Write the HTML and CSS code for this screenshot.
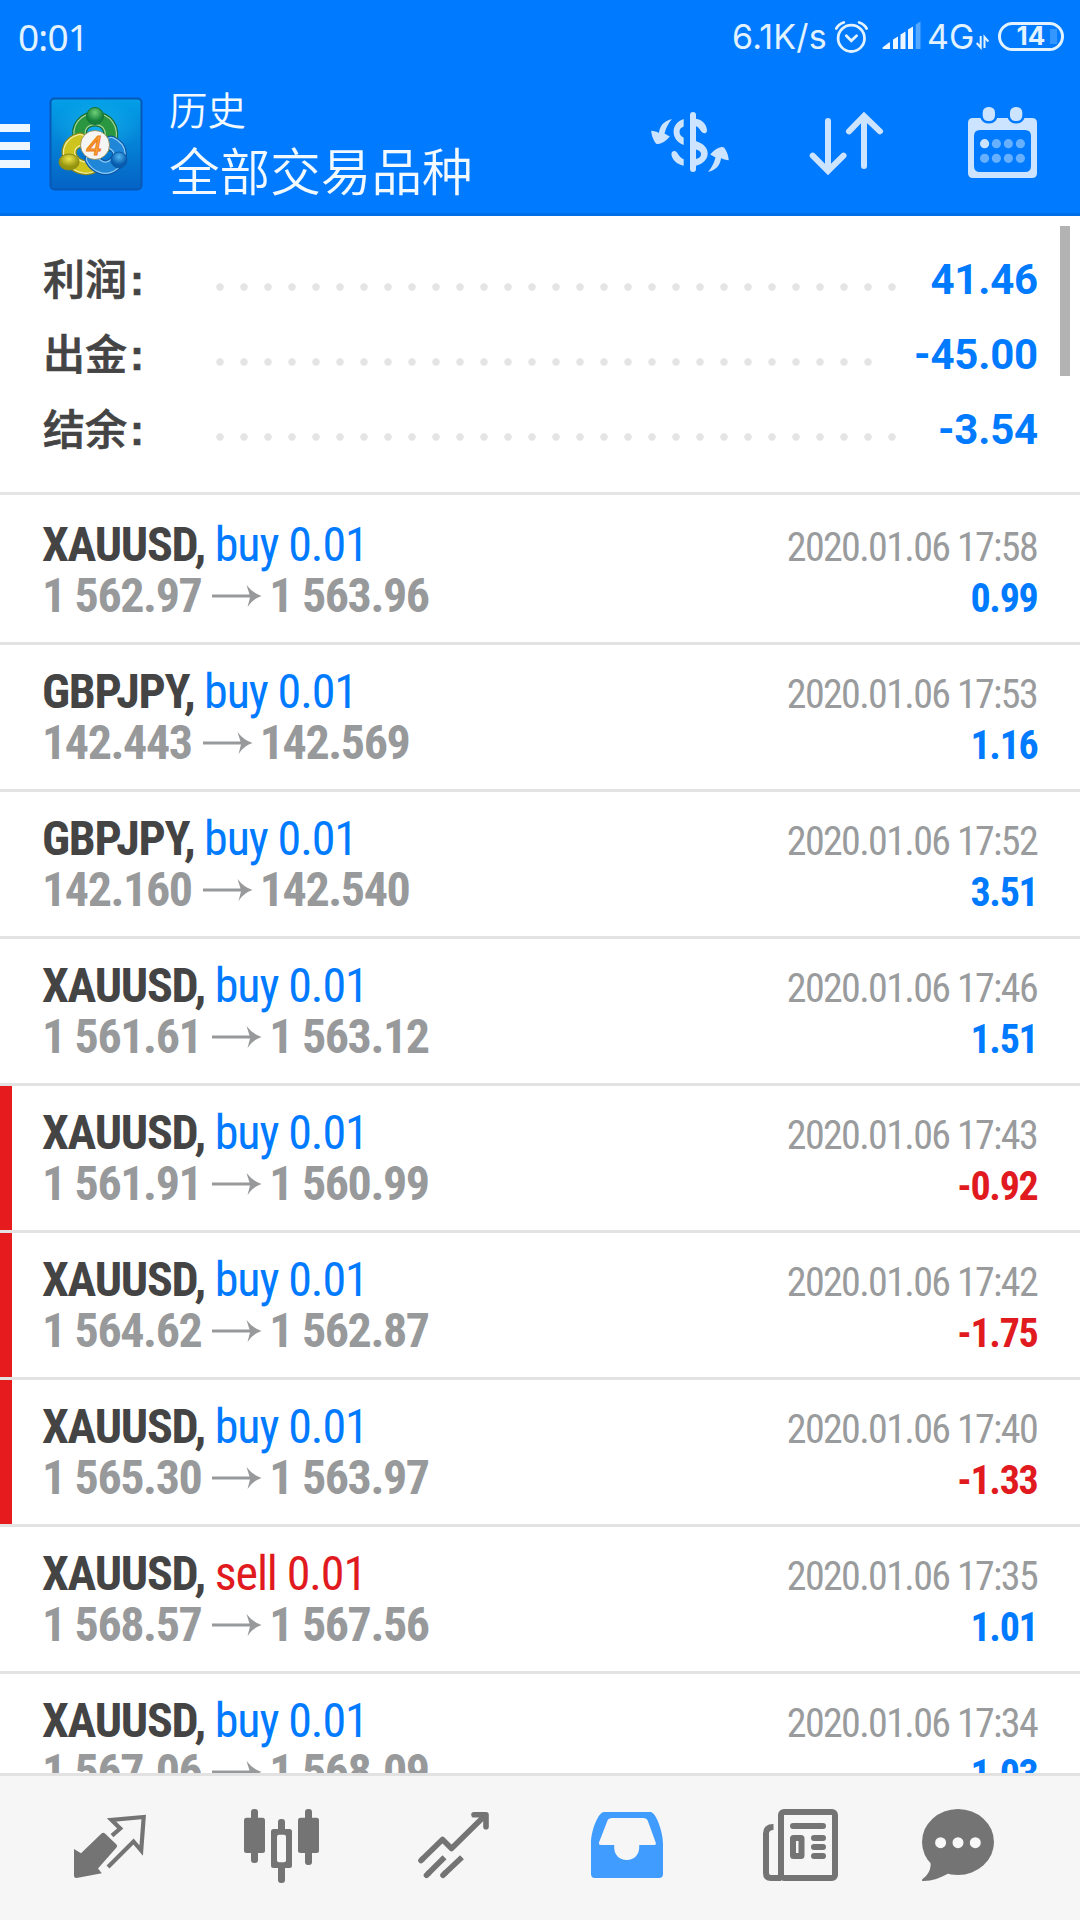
FILE: index.html
```html
<!DOCTYPE html>
<html lang="zh-CN">
<head>
<meta charset="utf-8">
<title>历史</title>
<link rel="stylesheet" href="styles.css">
</head>
<body>
<div class="app">
  <header class="header">
    <div class="status">
      <span class="clock">0:01</span>
      <span class="speed">6.1K/s</span>
      <svg class="status-icons" viewBox="834 18 90 38" width="90" height="38" fill="none" stroke="#e2f2ff" stroke-width="2.8" stroke-linecap="round">
        <circle cx="851.3" cy="38.3" r="13.2"/>
        <path d="M846.3 35.7l5 5 5.3-5M836.3 28.5q2.500-4.500 7.500-6M866.600 28.500q-2.500-4.500-7.500-6"/>
        <g fill="#eef7ff" stroke="none">
          <path d="M882.500 47.500L889 42.500q1-.5 1 .5v6h-6.500q-1.500 0-1-1.500zM893 39.500l5-3V49h-5zM900.500 34.500l5-3V49h-5zM908 29.500l5-3V49h-5z"/>
          <path fill="#55a8ff" d="M915.700 24.500l4.800-3V49h-4.800z"/>
        </g>
      </svg>
      <span class="net">4G</span>
      <svg class="data" viewBox="976 34 14 16" width="14" height="16" fill="none" stroke="#e2f2ff" stroke-width="2"><path d="M981.700 36v11.500l-4-4.500M985.500 48V37l3.800 4.500"/></svg>
      <span class="battery"><span class="level">14</span></span>
    </div>
    <div class="toolbar">
      <span class="menu"><i></i><i></i><i></i></span>
      <svg class="logo" viewBox="0 0 94 94" width="94" height="94">
        <defs>
          <linearGradient id="sky" x2="0" y2="1"><stop stop-color="#03a0e8"/><stop offset="1" stop-color="#0562c4"/></linearGradient>
          <radialGradient id="glow"><stop stop-color="#1cc0f0" stop-opacity=".6"/><stop offset="1" stop-color="#1cc0f0" stop-opacity="0"/></radialGradient>
          <radialGradient id="gh" cy=".3"><stop stop-color="#6fcf78"/><stop offset="1" stop-color="#15803a"/></radialGradient>
          <radialGradient id="yh" cy=".3"><stop stop-color="#eee64a"/><stop offset="1" stop-color="#95940f"/></radialGradient>
          <radialGradient id="bh" cy=".3"><stop stop-color="#50b5ee"/><stop offset="1" stop-color="#075caf"/></radialGradient>
        </defs>
        <rect x="1.500" y="1.500" width="91" height="91" rx="4" fill="url(#sky)" stroke="#0759b5" stroke-width="2"/>
        <ellipse cx="47" cy="30" rx="44" ry="28" fill="url(#glow)"/>
        <g fill="none" stroke-linecap="round">
          <path stroke="#17702c" stroke-width="15" d="M32 43C27 30 36 22 46 22s20 8 14 25"/>
          <path stroke="#a3d49a" stroke-width="12.500" d="M32 43C27 30 36 22 46 22s20 8 14 25"/>
          <path stroke="#2b9640" stroke-width="10" d="M32 43C27 30 36 22 46 22s20 8 14 25"/>
          <path stroke="#8d8a10" stroke-width="15" d="M31 43c-11 3-13 12-9 19s14 11 22 7"/>
          <path stroke="#f3efa0" stroke-width="12.500" d="M31 43c-11 3-13 12-9 19s14 11 22 7"/>
          <path stroke="#cdc41d" stroke-width="10" d="M31 43c-11 3-13 12-9 19s14 11 22 7"/>
          <path stroke="#0a57a8" stroke-width="15" d="M62 46c11 5 11 16 2 22-8 6-17 1-21-6"/>
          <path stroke="#8ccbf5" stroke-width="12.500" d="M62 46c11 5 11 16 2 22-8 6-17 1-21-6"/>
          <path stroke="#1f86d8" stroke-width="10" d="M62 46c11 5 11 16 2 22-8 6-17 1-21-6"/>
        </g>
        <circle cx="46" cy="19" r="8.500" fill="url(#gh)" stroke="#167235"/>
        <ellipse cx="20" cy="65" rx="10" ry="8" fill="url(#yh)" stroke="#8b8b19"/>
        <circle cx="70" cy="63" r="8" fill="url(#bh)" stroke="#0b5ba4"/>
        <circle cx="46" cy="48" r="14.500" fill="#f5f5f3" stroke="#887a3a" stroke-width=".7"/>
        <text class="logo-num" x="45" y="57.500" text-anchor="middle">4</text>
      </svg>
      <div class="titles">
        <div class="title-small">历史</div>
        <div class="title-large">全部交易品种</div>
      </div>
      <div class="actions">
        <svg class="currency" viewBox="650 104 80 76" width="80" height="76" fill="#cce4ff">
          <rect x="690" y="112" width="6" height="60" rx="3"/>
          <path d="M683.700 119c-6.500 2-10.100 7-10.100 12.700s3.600 11 10.100 13.200v-7.200c-2.700-1.600-4.200-3.300-4.200-6s1.500-4 4.200-5.200zM695.500 118.700c8 1 11.500 7 11.500 12 0 2.500-3 3.500-5 1.500-2.500-3-3-5-6.500-6.300zM695.500 141c8.200 2.500 12.200 7 12.200 12.500s-4.200 10.500-12.200 12.400v-6.800c4.200-.7 5.500-2.600 5.500-5s-1.500-3.800-5.500-4.700zM683.700 165.700c-7-1.500-11.500-6-12.300-11-.3-3.500 3.500-5 5.800-2 2 3 3.500 5.500 6.500 6.500z"/>
          <path id="swap" d="M671.900 119c-9 2.500-12 7-13 14-2-1.500-5-2-7.700-2.300.3 5.300 2.800 10.300 4.800 12.800q1 .8 2.500.5c4.500-1 8.500-4 11.300-7.500l-5.300-3c1.500-5.500 3.500-9.500 7.400-14.500z"/>
          <use href="#swap" transform="rotate(180 690 145.500)"/>
        </svg>
        <svg viewBox="806 104 80 76" width="80" height="76" fill="none" stroke="#cce4ff" stroke-width="6" stroke-linecap="round">
          <path d="M828 121v48M812.700 155.700l15.300 15.300 15.500-15.300M864 166v-48M849 131.300l15-15.300 16 15.300"/>
        </svg>
        <svg viewBox="963 104 80 76" width="80" height="76" fill="#cce4ff">
          <path fill-rule="evenodd" d="M973 118h59q5 0 5 5v50q0 5-5 5h-59q-5 0-5-5v-50q0-5 5-5zm7 12q-6 0-6 6v30q0 6 6 6h45q6 0 6-6v-30q0-6-6-6z"/>
          <g stroke="#007aff" stroke-width="5" paint-order="stroke"><rect x="982.700" y="107" width="12.300" height="14" rx="5.500"/><rect x="1010" y="107" width="12.300" height="14" rx="5.500"/></g>
          <circle cx="984.600" cy="143.700" r="4.600"/>
          <g fill="#66b0ff"><circle cx="996.400" cy="143.700" r="4.600"/><circle cx="1008.400" cy="143.700" r="4.600"/><circle cx="1020.400" cy="143.700" r="4.600"/><circle cx="984.600" cy="158.300" r="4.600"/><circle cx="996.400" cy="158.300" r="4.600"/><circle cx="1008.400" cy="158.300" r="4.600"/><circle cx="1020.400" cy="158.300" r="4.600"/></g>
        </svg>
      </div>
    </div>
  </header>

  <main class="content">
    <span class="scrollbar"></span>
    <section class="summary">
      <div class="total"><span class="label">利润<b>:</b></span><span class="dots"></span><span class="amount">41.46</span></div>
      <div class="total"><span class="label">出金<b>:</b></span><span class="dots short"></span><span class="amount">-45.00</span></div>
      <div class="total"><span class="label">结余<b>:</b></span><span class="dots"></span><span class="amount">-3.54</span></div>
    </section>
    <section class="deals" id="deals"></section>
  </main>

  <nav class="tabs">
    <svg viewBox="70 1805 80 80" width="80" height="80"><path fill="#747474" d="M74 1849l7 4.300L101.500 1833.500q1.800-1.500 3.500 0L116.500 1844.500q1.300 1.500 0 3L98 1868.500l3.800 4.800-25.300 4.700q-2.500 0-2.500-2.500z"/><path fill="none" stroke="#747474" stroke-width="4.200" d="M112 1835.700l8.200-7.200-8.700-8.500 32.200-3-2.500 33.500-7.700-9-25.500 25.500"/></svg>
    <svg viewBox="242 1805 80 80" width="80" height="80" fill="#747474"><rect x="244" y="1817.700" width="21" height="35.300" rx="2.500"/><rect x="251" y="1809" width="7" height="54" rx="3"/><rect x="298" y="1817.700" width="21" height="35.300" rx="2.500"/><rect x="305" y="1809" width="7" height="56" rx="3"/><rect x="278" y="1819" width="7" height="64" rx="3"/><rect x="271" y="1829" width="21" height="39" rx="2.500"/><rect x="277" y="1834.700" width="9" height="27.500" rx="2" fill="#f6f6f6"/></svg>
    <svg viewBox="414 1805 80 80" width="80" height="80" fill="none" stroke="#747474" stroke-width="5.600"><path stroke-linejoin="round" d="M422 1859.500l20.500-20 9 9L485 1815.500M428 1873.700l16.500-16.500M444.500 1873.700l17.500-16.500"/><path stroke-linecap="round" stroke-linejoin="round" d="M474 1814.800h12v12M421 1860.500l1-1M426.500 1875.200l2-2M443 1875.200l2-2"/></svg>
    <svg class="tab-history" viewBox="587 1805 80 80" width="80" height="80" fill="#409cff"><path fill-rule="evenodd" d="M604 1812h46.500c5.500 0 12.500 20 12.500 31.500V1874q0 4-4 4h-64q-4 0-4-4v-30.500C591 1830 598.500 1812 604 1812zm8 6q-3.500 0-4.500 2.500l-8.500 22q-.5 2.500 2 2.500h13.200v2.500c0 7 5 12.500 12.500 12.500s12.500-5.500 12.500-12.500v-2.500h15q2.300 0 1.500-2.500l-8-22q-1-2.500-4-2.500z"/></svg>
    <svg class="tab-news" viewBox="761 1805 80 80" width="80" height="80" fill="none" stroke="#747474" stroke-width="6"><rect x="781" y="1812" width="54" height="66" rx="3"/><path d="M773.500 1827q-7.500 0-7.500 6.500V1873q0 5 5 5h10"/><path d="M793 1826h30M814 1838h9M814 1847h9M814 1856h9" stroke-linecap="round"/><rect x="793" y="1838" width="8.500" height="18" rx=".5"/></svg>
    <svg class="tab-chat" viewBox="918 1805 80 80" width="80" height="80" fill="#747474"><ellipse cx="958" cy="1842" rx="36" ry="33"/><path d="M930.500 1862c1 7-2.500 13-8 17q-1.500 2 1 2c9 0 16.500-3 25-7.500z"/><g fill="#f8f8f8"><circle cx="940.600" cy="1842.700" r="5.500"/><circle cx="958" cy="1842.700" r="5.500"/><circle cx="975.300" cy="1842.700" r="5.500"/></g></svg>
  </nav>
</div>
<script src="deals.js"></script>
</body>
</html>
```
FILE: styles.css
```css
* { box-sizing: border-box; }
body { margin: 0; background: #fff; }
.app {
  width: 1080px;
  height: 1920px;
  display: flex;
  flex-direction: column;
  overflow: hidden;
  font-family: Roboto, "Noto Sans CJK SC", sans-serif;
}

.header {
  height: 216px;
  flex: none;
  background: #007aff;
  border-bottom: 3px solid #006ee4;
}
.status {
  height: 74px;
  display: flex;
  align-items: center;
  padding: 0 16px 0 18px;
  color: #e2f2ff;
  font-family: Inter, sans-serif;
  font-size: 34px;
  line-height: 74px;
}
.clock { font-family: "Noto Sans", sans-serif; font-size: 37px; letter-spacing: -0.8px; flex: 1; }
.speed { width: 102px; white-space: nowrap; letter-spacing: 0.2px; }
.net { width: 48px; margin-left: 3px; margin-right: 1px; }
.data { margin-top: 10px; margin-left: -1px; }
.battery {
  width: 66px;
  height: 29px;
  margin-left: 9px;
  margin-bottom: 2px;
  border: 3px solid #e2f2ff;
  border-radius: 15px;
  display: flex;
  align-items: center;
  justify-content: center;
  background: linear-gradient(#3397ff, #3397ff) 49px 4px / 7px 15px no-repeat;
}
.level { font-size: 26px; font-weight: 700; line-height: 24px; }

.toolbar { height: 139px; display: flex; align-items: flex-start; }
.menu { width: 30px; margin-top: 50px; display: flex; flex-direction: column; gap: 10px; }
.menu i { height: 8px; background: #eef6ff; }
.logo { margin: 23px 0 0 19px; }
.logo-num { font: italic 400 27px "Liberation Sans", sans-serif; fill: #ffae3c; stroke: #ee7d1c; stroke-width: 1.2px; }
.titles { margin: 10px 0 0 26px; color: #f2f9ff; font-weight: 350; font-family: "Noto Sans CJK SC", sans-serif; }
.title-small { font-size: 38.5px; line-height: 48px; }
.title-large { font-size: 50.6px; line-height: 74px; }
.actions { flex: 1; display: flex; justify-content: flex-end; gap: 77px; padding: 30px 37px 0 0; }
.currency { margin-right: -1px; }

.content { flex: 1; min-height: 0; overflow: hidden; position: relative; }
.scrollbar { position: absolute; right: 10px; top: 10px; width: 10px; height: 150px; background: #b3b3b3; }
.summary { height: 279px; padding: 26px 42px 0 43px; border-bottom: 3px solid #e5e5e5; }
.total { height: 75px; display: flex; align-items: center; }
.label {
  width: 165px;
  margin-top: -3px;
  color: #444;
  font: 500 42px/75px "Noto Sans CJK SC", sans-serif;
  -webkit-text-stroke: 0.7px #444;
  white-space: nowrap;
}
.label b { font-family: "Liberation Sans", sans-serif; font-weight: 700; margin-left: 3px; }
.dots {
  width: 696px;
  height: 24px;
  margin-top: 15px;
  background: radial-gradient(circle, #e4e4e4 3.3px, transparent 4.2px) 0 0 / 24px 24px;
}
.dots.short { width: 672px; }
.amount { flex: 1; text-align: right; color: #007aff; font-size: 42px; font-weight: 700; letter-spacing: -0.2px; }

.deals { padding-top: 3px; }
.deal {
  height: 147px;
  padding: 21px 42px 0 42px;
  border-bottom: 3px solid #e3e3e3;
}
.deal.loss { padding-left: 30px; border-left: 12px solid #e51b1e; border-bottom: 0; height: 144px; margin-bottom: 3px; box-shadow: 0 3px #e3e3e3; }
.line {
  display: flex;
  align-items: baseline;
  justify-content: space-between;
  height: 51px;
  font-family: "Roboto Condensed", Roboto, sans-serif;
  font-stretch: 75%;
  font-size: 48px;
  line-height: 51px;
  letter-spacing: -1.35px;
  white-space: pre;
}
.symbol { font-weight: 700; color: #444; letter-spacing: -1.25px; }
.buy, .sell { letter-spacing: -1.1px; }
.buy { color: #007aff; }
.sell { color: #e01a1e; }
.prices { color: #97999b; font-weight: 700; letter-spacing: -1.4px; }
.arrow { margin: 0 7px 4px 11px; }
.time { color: #999b9d; font-size: 40px; line-height: 40px; letter-spacing: -1.65px; padding-right: 1px; }
.profit { color: #007aff; font-size: 40px; line-height: 40px; font-weight: 700; letter-spacing: -1.3px; padding-right: 0.5px; }
.profit.neg { color: #e01a1e; }

.tabs {
  height: 147px;
  flex: none;
  border-top: 3px solid #e2e2e2;
  background: #f6f6f6;
  display: flex;
  gap: 92px;
  padding: 29px 70px 0;
}
.tabs svg { flex: none; }
.tab-history { margin-left: 1px; }
.tab-news { margin-left: 2px; }
.tab-chat { margin-left: -15px; }
```
FILE: deals.js
```js
const deals = [
  ["XAUUSD", "buy", "1 562.97", "1 563.96", "17:58", "0.99"],
  ["GBPJPY", "buy", "142.443", "142.569", "17:53", "1.16"],
  ["GBPJPY", "buy", "142.160", "142.540", "17:52", "3.51"],
  ["XAUUSD", "buy", "1 561.61", "1 563.12", "17:46", "1.51"],
  ["XAUUSD", "buy", "1 561.91", "1 560.99", "17:43", "-0.92"],
  ["XAUUSD", "buy", "1 564.62", "1 562.87", "17:42", "-1.75"],
  ["XAUUSD", "buy", "1 565.30", "1 563.97", "17:40", "-1.33"],
  ["XAUUSD", "sell", "1 568.57", "1 567.56", "17:35", "1.01"],
  ["XAUUSD", "buy", "1 567.06", "1 568.09", "17:34", "1.03"]
];
const arrow = '<svg class="arrow" width="50" height="24" viewBox="0 0 50 24" fill="#97999b"><path d="M0 10.500h37.500L34.500 1q6 8 15 11-9 3-14 11l2.500-9.500H0z"/></svg>';
document.getElementById("deals").innerHTML = deals.map(([symbol, side, from, to, time, profit]) => {
  const loss = profit.startsWith("-");
  return `<article class="deal${loss ? " loss" : ""}">
    <div class="line"><span><span class="symbol">${symbol},</span> <span class="${side}">${side} 0.01</span></span><span class="time">2020.01.06 ${time}</span></div>
    <div class="line"><span class="prices">${from}${arrow}${to}</span><span class="profit${loss ? " neg" : ""}">${profit}</span></div>
  </article>`;
}).join("");
```
